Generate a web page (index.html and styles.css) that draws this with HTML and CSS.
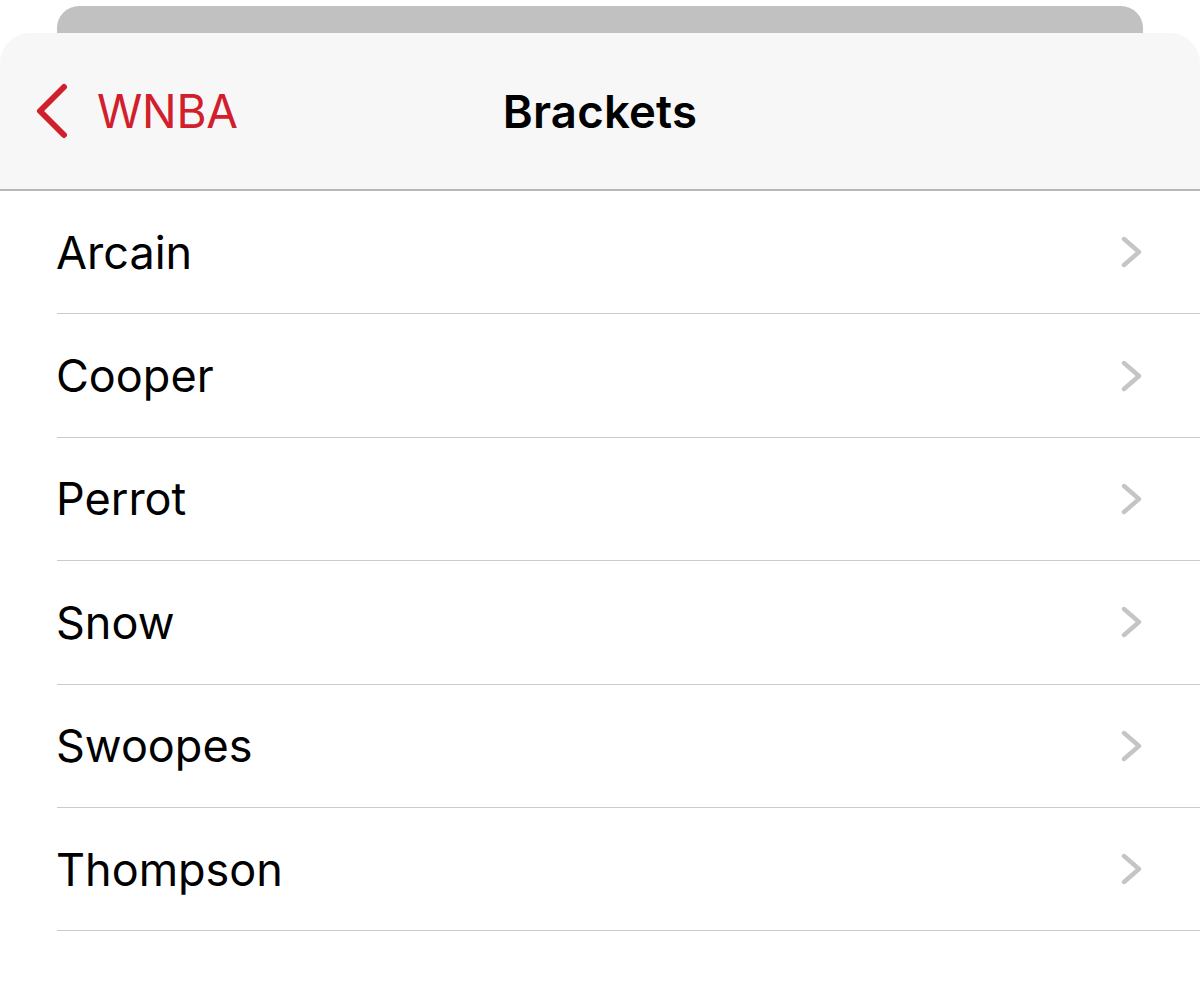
FILE: index.html
```html
<!DOCTYPE html>
<html lang="en">
<head>
<meta charset="utf-8">
<title>Brackets</title>
<link rel="stylesheet" href="styles.css">
</head>
<body>
<div class="stack">
  <div class="back-card"></div>
  <div class="sheet">
    <header class="nav">
      <a class="back" href="#">
        <svg class="back-icon" width="36" height="56" viewBox="0 0 36 56" aria-hidden="true">
          <path d="M30 4 L6 28 L30 52" fill="none" stroke="currentColor" stroke-width="6" stroke-linecap="round" stroke-linejoin="round"/>
        </svg>
        <span class="back-label">WNBA</span>
      </a>
      <h1 class="title">Brackets</h1>
      <span class="spacer"></span>
    </header>
    <ul class="list">
      <li class="row"><span class="row-label">Arcain</span><svg class="chev" width="24" height="32" viewBox="0 0 24 32" aria-hidden="true"><path d="M4 3 L19 16 L4 29" fill="none" stroke="currentColor" stroke-width="4.4" stroke-linecap="round" stroke-linejoin="round"/></svg></li>
      <li class="row"><span class="row-label">Cooper</span><svg class="chev" width="24" height="32" viewBox="0 0 24 32" aria-hidden="true"><path d="M4 3 L19 16 L4 29" fill="none" stroke="currentColor" stroke-width="4.4" stroke-linecap="round" stroke-linejoin="round"/></svg></li>
      <li class="row"><span class="row-label">Perrot</span><svg class="chev" width="24" height="32" viewBox="0 0 24 32" aria-hidden="true"><path d="M4 3 L19 16 L4 29" fill="none" stroke="currentColor" stroke-width="4.4" stroke-linecap="round" stroke-linejoin="round"/></svg></li>
      <li class="row"><span class="row-label">Snow</span><svg class="chev" width="24" height="32" viewBox="0 0 24 32" aria-hidden="true"><path d="M4 3 L19 16 L4 29" fill="none" stroke="currentColor" stroke-width="4.4" stroke-linecap="round" stroke-linejoin="round"/></svg></li>
      <li class="row"><span class="row-label">Swoopes</span><svg class="chev" width="24" height="32" viewBox="0 0 24 32" aria-hidden="true"><path d="M4 3 L19 16 L4 29" fill="none" stroke="currentColor" stroke-width="4.4" stroke-linecap="round" stroke-linejoin="round"/></svg></li>
      <li class="row"><span class="row-label">Thompson</span><svg class="chev" width="24" height="32" viewBox="0 0 24 32" aria-hidden="true"><path d="M4 3 L19 16 L4 29" fill="none" stroke="currentColor" stroke-width="4.4" stroke-linecap="round" stroke-linejoin="round"/></svg></li>
    </ul>
  </div>
</div>
</body>
</html>
```
FILE: styles.css
```css
* { box-sizing: border-box; }

html, body {
  margin: 0;
  padding: 0;
  background: #ffffff;
}

body {
  width: 1200px;
  height: 981px;
  overflow: hidden;
  font-family: Inter, "Liberation Sans", Arial, sans-serif;
  color: #000;
}

.stack {
  padding-top: 6px;
}

.back-card {
  margin: 0 57px;
  height: 27px;
  background: #c1c1c1;
  border-radius: 22px 22px 0 0;
}

.sheet {
  background: #ffffff;
  border-radius: 30px 30px 0 0;
}

.nav {
  height: 158px;
  background: #f7f7f7;
  border-radius: 30px 30px 0 0;
  border-bottom: 2px solid #b8b8b8;
  display: grid;
  grid-template-columns: 1fr auto 1fr;
  align-items: center;
  padding: 0 34px;
}

.back {
  display: flex;
  align-items: center;
  gap: 27px;
  color: #d1202c;
  text-decoration: none;
  justify-self: start;
}

.back-icon {
  display: block;
  flex: none;
}

.back-label {
  font-size: 46px;
  font-weight: 400;
  letter-spacing: -0.3px;
}

.title {
  margin: 0;
  font-size: 45.5px;
  font-weight: 600;
  letter-spacing: 0.2px;
  color: #000;
}

.list {
  list-style: none;
  margin: 0;
  padding: 0;
}

.row {
  margin-left: 57px;
  height: 123.4px;
  border-bottom: 1px solid #cbcbcb;
  display: flex;
  align-items: center;
  justify-content: space-between;
  padding-left: 0;
  padding-right: 56px;
}

.row-label {
  font-size: 45px;
  font-weight: 400;
  margin-left: -1px;
}

.chev {
  display: block;
  color: #c5c5c7;
  flex: none;
}
```
